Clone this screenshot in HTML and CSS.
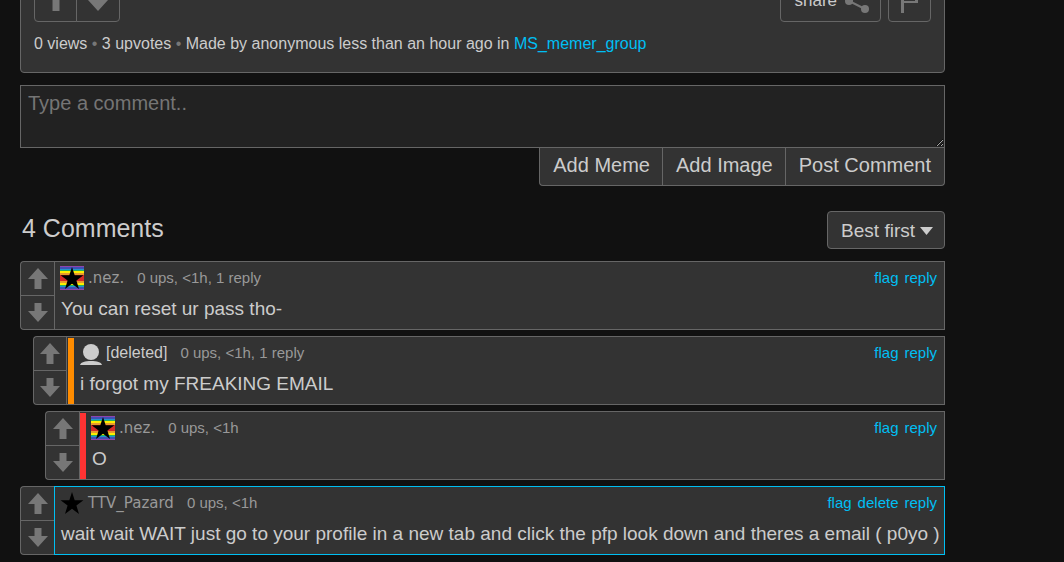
FILE: index.html
```html
<!DOCTYPE html>
<html lang="en">
<head>
<meta charset="utf-8">
<title>Comments</title>
<link rel="stylesheet" href="styles.css">
</head>
<body>
<svg class="defs" width="0" height="0" aria-hidden="true">
  <symbol id="up" viewBox="0 0 20 21"><path d="M10 0L20 11H13.500V21H6.500V11H0Z"/></symbol>
  <symbol id="down" viewBox="0 0 20 19"><path d="M6.500 0H13.500V8H20L10 19L0 8H6.500Z"/></symbol>
  <symbol id="star" viewBox="0 0 24 24"><path fill="#000" d="M12 1L14.700 9.300H23.400L16.400 14.500L19 23L12 17.800L5 23L7.600 14.500L0.600 9.300H9.300Z"/></symbol>
  <symbol id="rainbow" viewBox="0 0 24 24">
    <rect width="24" height="24" fill="#8e44ad"/>
    <rect y="1" width="24" height="22" fill="#3f51b5"/>
    <rect y="3" width="24" height="18" fill="#2196c8"/>
    <rect y="4" width="24" height="16" fill="#27ae60"/>
    <rect y="5" width="24" height="14" fill="#ffee00"/>
    <rect y="7" width="24" height="10" fill="#e89a2d"/>
    <rect y="9" width="24" height="6" fill="#d62828"/>
    <use href="#star"/>
  </symbol>
</svg>
<main class="page">
  <section class="card">
    <div class="actions">
      <div class="vote-pair">
        <button type="button" aria-label="Upvote"><svg width="20" height="21" viewBox="0 0 20 21"><path d="M10 0L20 10H13.500V21H6.500V10H0Z"/></svg></button>
        <button type="button" aria-label="Downvote"><svg width="20" height="21" viewBox="0 0 20 21"><path d="M6.500 0H13.500V10H20L10 21L0 10H6.500Z"/></svg></button>
      </div>
      <div class="share-group">
        <button type="button" class="share">share
          <svg width="24" height="24" viewBox="0 0 24 24"><path d="M20 4L4 12L20 20" fill="none" stroke="#777" stroke-width="2"/><circle cx="20" cy="4" r="4"/><circle cx="4" cy="12" r="4"/><circle cx="20" cy="20" r="4"/></svg>
        </button>
        <button type="button" class="flag" aria-label="Flag"><svg width="17" height="24" viewBox="0 0 17 24"><path d="M0 0H17V14H3V24H0Z M3 3V12H14V3Z" fill-rule="evenodd"/></svg></button>
      </div>
    </div>
    <p class="stats">0 views <span class="dot">•</span> 3 upvotes <span class="dot">•</span> Made by anonymous less than an hour ago in <a href="#">MS_memer_group</a></p>
  </section>

  <form class="composer">
    <textarea aria-label="Comment" placeholder="Type a comment.."></textarea>
    <div class="composer-buttons">
      <button type="button">Add Meme</button>
      <button type="button">Add Image</button>
      <button type="button">Post Comment</button>
    </div>
  </form>

  <header class="comments-head">
    <h2>4 Comments</h2>
    <button type="button" class="sort" aria-haspopup="listbox">Best first <svg width="13" height="8" viewBox="0 0 13 8"><path d="M0 0H13L6.500 8Z"/></svg></button>
  </header>

  <section class="comments">
    <article class="comment">
      <div class="votes">
        <button type="button" aria-label="Upvote"><svg width="20" height="21"><use href="#up"/></svg></button>
        <button type="button" aria-label="Downvote"><svg width="20" height="19"><use href="#down"/></svg></button>
      </div>
      <div class="body">
        <div class="meta">
          <svg class="avatar" width="24" height="24"><use href="#rainbow"/></svg>
          <span class="user">.nez.</span><span class="info">0 ups, &lt;1h, 1 reply</span>
          <nav class="links"><a href="#">flag</a><a href="#">reply</a></nav>
        </div>
        <p class="text">You can reset ur pass tho-</p>
      </div>
    </article>

    <article class="comment level-1">
      <div class="votes">
        <button type="button" aria-label="Upvote"><svg width="20" height="21"><use href="#up"/></svg></button>
        <button type="button" aria-label="Downvote"><svg width="20" height="19"><use href="#down"/></svg></button>
      </div>
      <div class="body">
        <div class="meta">
          <svg class="avatar" width="22" height="24" viewBox="0 0 22 24"><g fill="#ccc"><circle cx="11" cy="11" r="8"/><path d="M0 24C1 21 5 20 11 20S21 21 22 24Z"/></g></svg>
          <span class="user deleted">[deleted]</span><span class="info">0 ups, &lt;1h, 1 reply</span>
          <nav class="links"><a href="#">flag</a><a href="#">reply</a></nav>
        </div>
        <p class="text">i forgot my FREAKING EMAIL</p>
      </div>
    </article>

    <article class="comment level-2">
      <div class="votes">
        <button type="button" aria-label="Upvote"><svg width="20" height="21"><use href="#up"/></svg></button>
        <button type="button" aria-label="Downvote"><svg width="20" height="19"><use href="#down"/></svg></button>
      </div>
      <div class="body">
        <div class="meta">
          <svg class="avatar" width="24" height="24"><use href="#rainbow"/></svg>
          <span class="user">.nez.</span><span class="info">0 ups, &lt;1h</span>
          <nav class="links"><a href="#">flag</a><a href="#">reply</a></nav>
        </div>
        <p class="text">O</p>
      </div>
    </article>

    <article class="comment own">
      <div class="votes">
        <button type="button" aria-label="Upvote"><svg width="20" height="21"><use href="#up"/></svg></button>
        <button type="button" aria-label="Downvote"><svg width="20" height="19"><use href="#down"/></svg></button>
      </div>
      <div class="body">
        <div class="meta">
          <svg class="avatar" width="24" height="24"><use href="#star"/></svg>
          <span class="user">TTV_Pazard</span><span class="info">0 ups, &lt;1h</span>
          <nav class="links"><a href="#">flag</a><a href="#">delete</a><a href="#">reply</a></nav>
        </div>
        <p class="text">wait wait WAIT just go to your profile in a new tab and click the pfp look down and theres a email ( p0yo )</p>
      </div>
    </article>
  </section>
</main>
</body>
</html>
```
FILE: styles.css
```css
* { box-sizing: border-box; }
body {
  margin: 0;
  background: #111;
  color: #ccc;
  font-family: "Liberation Sans", Arial, sans-serif;
  font-size: 16px;
}
.defs { position: absolute; }
a { color: #00bff3; text-decoration: none; }
p, h2 { margin: 0; font-weight: normal; }
button {
  display: flex;
  align-items: center;
  justify-content: center;
  margin: 0;
  padding: 0;
  border: 1px solid #666;
  background: #333;
  color: #ccc;
  font-family: inherit;
}
svg { display: block; flex: none; fill: #777; }

.page { margin: 0 119px 0 20px; }

.card {
  margin-top: -35px;
  padding: 13px;
  background: #333;
  border: 1px solid #666;
  border-radius: 4px;
}
.actions { display: flex; justify-content: space-between; }
.actions button { height: 43px; border-radius: 4px; }
.vote-pair { display: flex; }
.vote-pair button { width: 43px; }
.vote-pair button:first-child { border-radius: 4px 0 0 4px; }
.vote-pair button:last-child { width: 44px; margin-left: -1px; border-radius: 0 4px 4px 0; }
.share-group { display: flex; gap: 7px; }
.actions .share { gap: 8px; padding: 0 11px 0 13px; font-size: 17px; }
.actions .flag { width: 43px; }
.stats { padding: 12px 0 5px; line-height: 20px; }
.dot { color: #777; }

.composer { margin-top: 12px; }
.composer textarea {
  display: block;
  width: 100%;
  height: 63px;
  padding: 6px 7px;
  border: 1px solid #666;
  border-radius: 0;
  background: #222;
  color: #ccc;
  font-family: inherit;
  font-size: 20px;
  line-height: 23px;
  outline: none;
  resize: vertical;
}
.composer textarea::placeholder { color: #757575; }
.composer-buttons { display: flex; justify-content: flex-end; }
.composer-buttons button {
  height: 38px;
  padding: 0 12px 3px 13px;
  border-width: 0 0 1px 1px;
  font-size: 20px;
}
.composer-buttons button:first-child { border-radius: 0 0 0 4px; }
.composer-buttons button:last-child { padding-right: 13px; border-right-width: 1px; border-radius: 0 0 4px 0; }

.comments-head {
  display: flex;
  align-items: center;
  justify-content: space-between;
  margin: 25px 0 12px;
  padding-left: 2px;
}
.comments-head h2 { padding-bottom: 3px; font-size: 25px; line-height: 29px; }
.sort {
  gap: 5px;
  height: 38px;
  padding: 2px 11px 0 13px;
  border-radius: 4px;
  font-size: 19px;
}
.sort svg { fill: #ccc; }

.comments { display: grid; gap: 6px; padding-bottom: 6px; }
.comment { display: flex; }
.level-1 { margin-left: 13px; }
.level-2 { margin-left: 25px; }
.votes { display: flex; flex-direction: column; width: 34px; flex: none; }
.level-1 .votes { width: 33px; }
.votes button { flex: 1; border-width: 1px 0 0 1px; }
.votes button:first-child { border-radius: 4px 0 0 0; }
.votes button:last-child { border-bottom-width: 1px; border-radius: 0 0 0 4px; }
.body {
  flex: 1;
  min-width: 0;
  padding: 4px 0 9px 5px;
  background: #333;
  border: 1px solid #666;
}
.level-1 .body, .level-2 .body { position: relative; }
.level-1 .body { padding-left: 13px; }
.level-2 .body { padding-left: 11px; }
.level-1 .body::before, .level-2 .body::before {
  content: "";
  position: absolute;
  top: 1px;
  bottom: 0;
  left: 1px;
  width: 6px;
  background: #ff8c00;
}
.level-2 .body::before { left: 0; background: #f33; }
.own .body { border-color: #00bff3; }
.meta {
  display: flex;
  align-items: center;
  height: 24px;
  padding-right: 7px;
  font-size: 15px;
  line-height: 20px;
  color: #999;
}
.user { margin-left: 4px; font-family: "DejaVu Sans", sans-serif; }
.user.deleted { color: #ccc; font-family: inherit; font-size: 16px; }
.info { margin-left: 13px; }
.info, .links { padding-bottom: 1px; }
.links { display: flex; gap: 6px; margin-left: auto; }
.text { margin-top: 7px; padding-left: 1px; font-size: 19px; line-height: 23px; }
.level-1 .text { padding-left: 0; }
```
